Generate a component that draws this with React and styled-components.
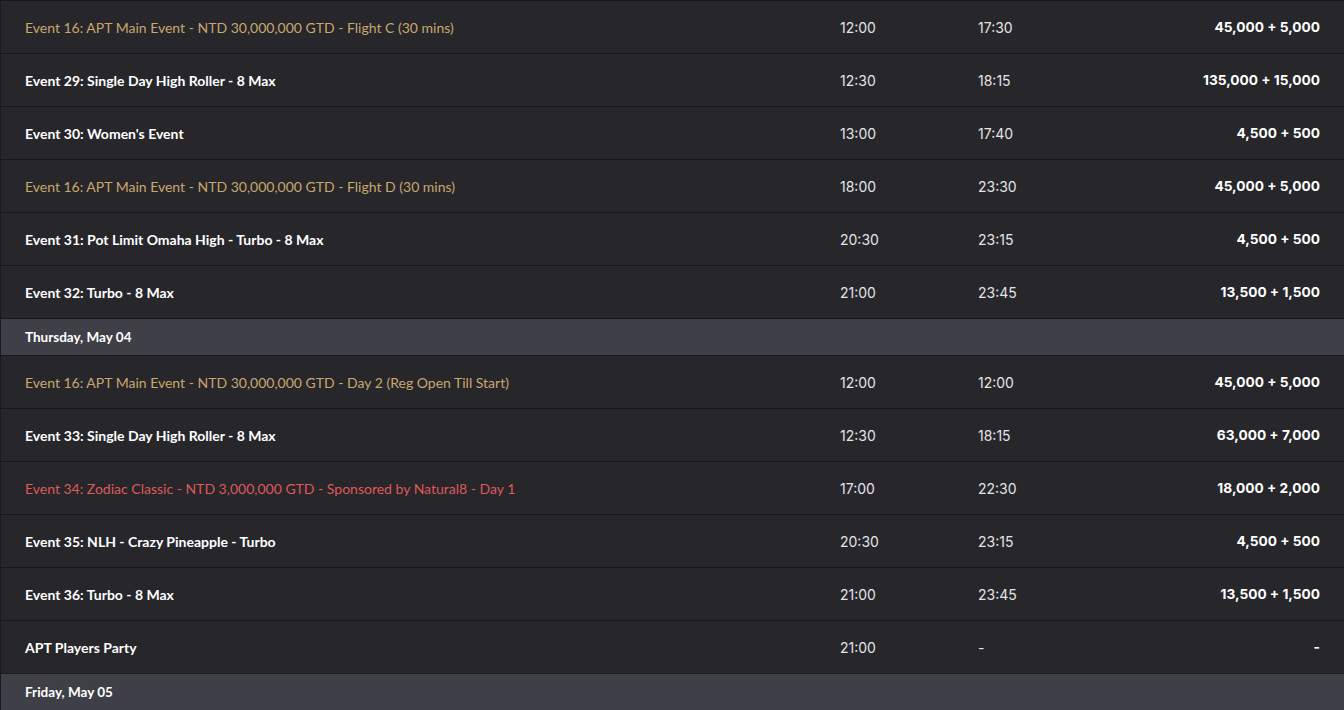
import React from "react";
import styled, { createGlobalStyle } from "styled-components";

const GlobalStyle = createGlobalStyle`
  body {
    margin: 0;
    background: #26262b;
  }
`;

const colors = {
  main: "#c9a86c",
  red: "#df5a57",
  plain: "#ffffff",
};

const schedule = [
  {
    rows: [
      { name: "Event 16: APT Main Event - NTD 30,000,000 GTD - Flight C (30 mins)", start: "12:00", end: "17:30", buyIn: "45,000 + 5,000", kind: "main" },
      { name: "Event 29: Single Day High Roller - 8 Max", start: "12:30", end: "18:15", buyIn: "135,000 + 15,000" },
      { name: "Event 30: Women's Event", start: "13:00", end: "17:40", buyIn: "4,500 + 500" },
      { name: "Event 16: APT Main Event - NTD 30,000,000 GTD - Flight D (30 mins)", start: "18:00", end: "23:30", buyIn: "45,000 + 5,000", kind: "main" },
      { name: "Event 31: Pot Limit Omaha High - Turbo - 8 Max", start: "20:30", end: "23:15", buyIn: "4,500 + 500" },
      { name: "Event 32: Turbo - 8 Max", start: "21:00", end: "23:45", buyIn: "13,500 + 1,500" },
    ],
  },
  {
    day: "Thursday, May 04",
    rows: [
      { name: "Event 16: APT Main Event - NTD 30,000,000 GTD - Day 2 (Reg Open Till Start)", start: "12:00", end: "12:00", buyIn: "45,000 + 5,000", kind: "main" },
      { name: "Event 33: Single Day High Roller - 8 Max", start: "12:30", end: "18:15", buyIn: "63,000 + 7,000" },
      { name: "Event 34: Zodiac Classic - NTD 3,000,000 GTD - Sponsored by Natural8 - Day 1", start: "17:00", end: "22:30", buyIn: "18,000 + 2,000", kind: "red" },
      { name: "Event 35: NLH - Crazy Pineapple - Turbo", start: "20:30", end: "23:15", buyIn: "4,500 + 500" },
      { name: "Event 36: Turbo - 8 Max", start: "21:00", end: "23:45", buyIn: "13,500 + 1,500" },
      { name: "APT Players Party", start: "21:00", end: "-", buyIn: "-" },
    ],
  },
  { day: "Friday, May 05", rows: [] },
];

const Table = styled.div`
  display: flex;
  flex-direction: column;
  border-left: 1px solid #1a1a1e;
  background: #26262b;
`;

const Row = styled.div`
  display: grid;
  grid-template-columns: 1fr 138px 142px 200px;
  align-items: center;
  height: 52px;
  padding: 0 24px;
  border-top: 1px solid #18181b;
`;

const DayHeader = styled.div`
  display: flex;
  align-items: center;
  height: 36px;
  padding: 0 24px;
  border-top: 1px solid #18181b;
  background: #3f3f47;
  color: #ffffff;
  font-family: Lato, "Open Sans", sans-serif;
  font-size: 13.5px;
  font-weight: 700;
`;

const Name = styled.div`
  font-family: Lato, "Open Sans", sans-serif;
  font-size: 14px;
  font-weight: ${(p) => (p.$kind ? 400 : 700)};
  color: ${(p) => colors[p.$kind || "plain"]};
  white-space: nowrap;
`;

const Time = styled.div`
  font-family: Inter, "Liberation Sans", sans-serif;
  font-size: 14px;
  font-weight: 400;
  color: #e4e4e7;
`;

const BuyIn = styled.div`
  text-align: right;
  font-family: Inter, "Liberation Sans", sans-serif;
  font-size: 13.7px;
  font-weight: 700;
  color: #ffffff;
`;

export default function App() {
  return (
    <>
      <GlobalStyle />
      <Table>
        {schedule.map((group, gi) => (
          <React.Fragment key={gi}>
            {group.day && <DayHeader>{group.day}</DayHeader>}
            {group.rows.map((r, i) => (
              <Row key={i}>
                <Name $kind={r.kind}>{r.name}</Name>
                <Time>{r.start}</Time>
                <Time>{r.end}</Time>
                <BuyIn>{r.buyIn}</BuyIn>
              </Row>
            ))}
          </React.Fragment>
        ))}
      </Table>
    </>
  );
}
